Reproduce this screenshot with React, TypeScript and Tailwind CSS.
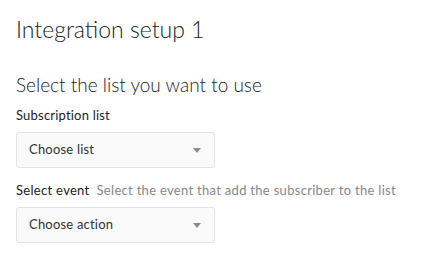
import React from "react";

function Select({ placeholder }: { placeholder: string }) {
  return (
    <div className="flex h-[36px] w-[199px] items-center justify-between rounded-[3px] border border-[#e3e3e3] bg-[#fafafa] pl-[12px] pr-[13px]">
      <span className="text-[13px] tracking-[0.2px] text-[#333]">{placeholder}</span>
      <span className="mt-[1px] h-0 w-0 border-x-[4px] border-t-[5px] border-x-transparent border-t-[#8a8a8a]" />
    </div>
  );
}

export default function App() {
  return (
    <div className="min-h-screen bg-white px-[16px] pt-[14px] font-['Lato',sans-serif] text-[#222]">
      <h1 className="text-[23px] font-light leading-[30px]">Integration setup 1</h1>

      <h2 className="mt-[29px] text-[19px] font-light leading-[24px]">Select the list you want to use</h2>

      <div className="mt-[9px] text-[13px] tracking-[0.2px] leading-[18px]">Subscription list</div>
      <div className="mt-[8px]">
        <Select placeholder="Choose list" />
      </div>

      <div className="mt-[13px] flex gap-[7px] text-[13px] tracking-[0.3px] leading-[18px]">
        <span>Select event</span>
        <span className="text-[#888]">Select the event that add the subscriber to the list</span>
      </div>
      <div className="mt-[8px]">
        <Select placeholder="Choose action" />
      </div>
    </div>
  );
}
